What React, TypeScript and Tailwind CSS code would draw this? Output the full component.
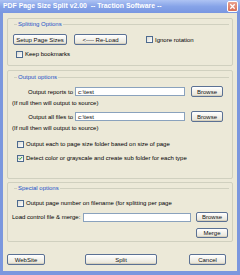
import React from "react";

const F = { fontFamily: '"Liberation Sans", Arial, sans-serif' };

function Btn({ children, className = "" }: { children: React.ReactNode; className?: string }) {
  return (
    <div
      className={
        "flex items-center justify-center rounded-[2px] border border-[#5b7194] bg-gradient-to-b from-white to-[#e6e3d6] text-[6px] leading-none text-[#111] shadow-[inset_0_-1px_0_#d6d0bd] " +
        className
      }
    >
      {children}
    </div>
  );
}

function Check({ checked = false }: { checked?: boolean }) {
  return (
    <div className="relative h-[7px] w-[7px] shrink-0 border border-[#4d6a8f] bg-gradient-to-br from-[#dcdcd4] to-white">
      {checked && (
        <svg viewBox="0 0 7 7" className="absolute left-0 top-0 h-[5px] w-[5px]">
          <path d="M1 3.2 L2.6 4.8 L5.8 1.4" stroke="#21a121" strokeWidth="1.3" fill="none" />
        </svg>
      )}
    </div>
  );
}

function Legend({ children }: { children: React.ReactNode }) {
  return (
    <div className="flex items-center pl-[6px] pr-[3px]">
      <div className="h-px w-[3px] bg-[#d0d0bf]" />
      <span className="px-[1px] text-[6px] leading-none text-[#2152c9]">{children}</span>
      <div className="h-px flex-1 bg-[#d0d0bf]" />
    </div>
  );
}

function TextBox({ value, className = "" }: { value?: string; className?: string }) {
  return (
    <div className={"flex items-center border border-[#8aa2bd] bg-white pl-[2px] text-[6px] leading-none text-[#111] " + className}>
      {value}
    </div>
  );
}

export default function App() {
  return (
    <div className="flex h-[275px] w-[240px] flex-col overflow-hidden bg-[#ece9d8]" style={F}>
      {/* Title bar */}
      <div className="flex h-[13px] shrink-0 items-center justify-between bg-gradient-to-b from-[#aec3f3] via-[#86a3e8] to-[#7896e1] pl-[3px] pr-[2px]">
        <span className="whitespace-nowrap text-[6.9px] font-bold leading-none text-white">
          PDF Page Size Split v2.00&nbsp; -- Traction Software --
        </span>
        <div className="flex h-[11px] w-[11px] items-center justify-center rounded-[2px] border border-white bg-gradient-to-b from-[#e9a08e] to-[#d86f57]">
          <svg viewBox="0 0 8 8" className="h-[7px] w-[7px]">
            <path d="M1.5 1.5 L6.5 6.5 M6.5 1.5 L1.5 6.5" stroke="white" strokeWidth="1.5" />
          </svg>
        </div>
      </div>

      {/* Body */}
      <div className="flex flex-1 flex-col border-x-[3px] border-b-[4px] border-[#7b97de] pl-[4px] pr-[4px] pt-[5px]">
        {/* Splitting options */}
        <div className="box-border flex h-[48px] flex-col rounded-[2px] border border-[#d0d0bf]">
          <div className="flex h-[10px] items-center">
            <div className="flex-1">
              <Legend>Splitting Options</Legend>
            </div>
          </div>
          <div className="mt-[5px] flex h-[11px] items-center pl-[5px]">
            <Btn className="h-[11px] w-[54px]">Setup Page Sizes</Btn>
            <Btn className="ml-[7px] h-[11px] w-[53px]">&lt;---- Re-Load</Btn>
            <div className="ml-[19px] flex items-center gap-[2px]">
              <Check />
              <span className="text-[6px] leading-none">Ignore rotation</span>
            </div>
          </div>
          <div className="mt-[5px] flex h-[8px] items-center gap-[2px] pl-[8px]">
            <Check />
            <span className="text-[6px] leading-none">Keep bookmarks</span>
          </div>
        </div>

        {/* Output options */}
        <div className="mt-[4px] box-border flex h-[109px] flex-col rounded-[2px] border border-[#d0d0bf]">
          <div className="flex h-[12px] items-center">
            <div className="flex-1">
              <Legend>Output options</Legend>
            </div>
          </div>
          <div className="mt-[3px] flex h-[11px] items-center">
            <div className="w-[65px] text-right text-[6px] leading-none">Output reports to</div>
            <TextBox value="c:\test" className="ml-[2px] h-[9px] w-[110px]" />
            <Btn className="ml-[6px] h-[11px] w-[32px]">Browse</Btn>
          </div>
          <div className="mt-[1px] flex h-[10px] items-center pl-[4px] text-[6px] leading-none">
            (If null then will output to source)
          </div>
          <div className="mt-[3px] flex h-[11px] items-center">
            <div className="w-[65px] text-right text-[6px] leading-none">Output all files to</div>
            <TextBox value="c:\test" className="ml-[2px] h-[9px] w-[110px]" />
            <Btn className="ml-[6px] h-[11px] w-[32px]">Browse</Btn>
          </div>
          <div className="mt-[1px] flex h-[10px] items-center pl-[4px] text-[6px] leading-none">
            (If null then will output to source)
          </div>
          <div className="mt-[7px] flex h-[8px] items-center gap-[2px] pl-[9px]">
            <Check />
            <span className="text-[6px] leading-none">Output each to page size folder based on size of page</span>
          </div>
          <div className="mt-[6px] flex h-[8px] items-center gap-[2px] pl-[9px]">
            <Check checked />
            <span className="text-[6px] leading-none">Detect color or grayscale and create sub folder for each type</span>
          </div>
        </div>

        {/* Special options */}
        <div className="mt-[3px] box-border flex h-[60px] flex-col rounded-[2px] border border-[#d0d0bf]">
          <div className="flex h-[10px] items-center">
            <div className="flex-1">
              <Legend>Special options</Legend>
            </div>
          </div>
          <div className="mt-[6px] flex h-[8px] items-center gap-[2px] pl-[9px]">
            <Check />
            <span className="whitespace-nowrap text-[6px] leading-none">Output page number on filename (for splitting per page</span>
          </div>
          <div className="mt-[5px] flex h-[10px] items-center pl-[4px]">
            <span className="w-[70px] text-[6px] leading-none">Load control file &amp; merge:</span>
            <TextBox className="ml-[1px] h-[9px] w-[108px]" />
            <Btn className="ml-[5px] h-[10px] w-[32px]">Browse</Btn>
          </div>
          <div className="mt-[6px] flex h-[10px] items-center justify-end pr-[4px]">
            <Btn className="h-[10px] w-[32px]">Merge</Btn>
          </div>
        </div>

        {/* Bottom buttons */}
        <div className="mt-[12px] flex h-[11px] items-center pr-[7px]">
          <Btn className="h-[11px] w-[38px]">WebSite</Btn>
          <Btn className="ml-[40px] h-[11px] w-[72px]">Split</Btn>
          <Btn className="ml-auto h-[11px] w-[37px]">Cancel</Btn>
        </div>
      </div>
    </div>
  );
}
